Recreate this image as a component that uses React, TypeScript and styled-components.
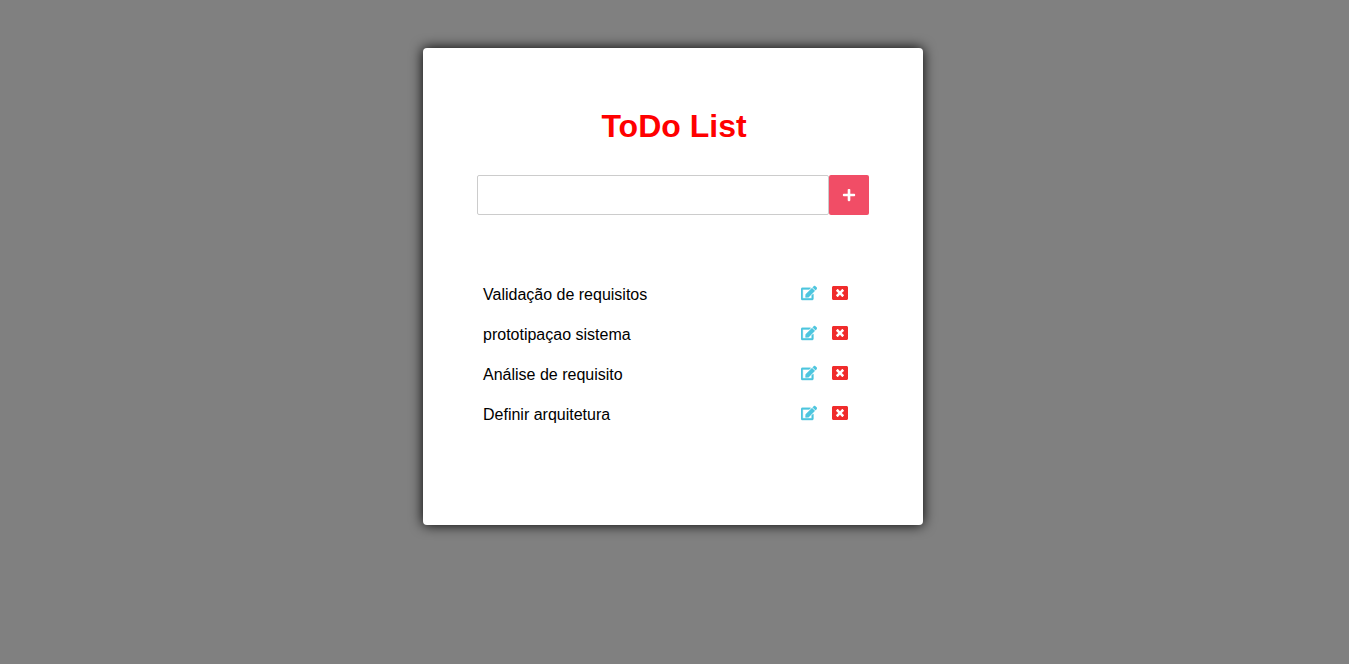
import React from "react";
import styled, { createGlobalStyle } from "styled-components";
import { FaEdit, FaPlus, FaWindowClose } from "react-icons/fa";

const GlobalStyle = createGlobalStyle`
  * { margin: 0; padding: 0; box-sizing: border-box; }
  body {
    background: #808080;
    font-family: "Liberation Sans", Arial, sans-serif;
    font-size: 16px;
    color: #000;
  }
`;

const Page = styled.div`
  min-height: 100vh;
  padding: 48px 0 0 423px;
`;

const Card = styled.main`
  width: 500px;
  height: 477px;
  padding: 59px 54px 0;
  background: #fff;
  border-radius: 4px;
  box-shadow: 0 0 13px #000;
`;

const Title = styled.h1`
  padding-left: 2px;
  font-size: 32px;
  line-height: 38px;
  text-align: center;
  color: #f00;
`;

const Form = styled.form`
  display: flex;
  height: 40px;
  margin-top: 30px;
`;

const Field = styled.input`
  width: 352px;
  padding: 0 10px;
  border: 1px solid #ccc;
  border-radius: 2px;
  font: inherit;
  outline: none;
`;

const AddButton = styled.button`
  display: flex;
  align-items: center;
  justify-content: center;
  width: 40px;
  border: 0;
  border-radius: 2px;
  background: #f14d66;
  color: #fff;
  font-size: 14px;
`;

const List = styled.ul`
  margin-top: 60px;
  list-style: none;
`;

const Item = styled.li`
  display: flex;
  align-items: center;
  justify-content: space-between;
  height: 40px;
  padding: 0 21px 0 6px;
`;

const Actions = styled.span`
  display: flex;
  gap: 15px;
  padding-bottom: 4px;
`;

const EditIcon = styled(FaEdit)`
  color: #4dc6df;
  stroke-width: 12px;
`;

const DeleteIcon = styled(FaWindowClose)`
  color: #f02b2b;
`;

const tasks = [
  "Validação de requisitos",
  "prototipaçao sistema",
  "Análise de requisito",
  "Definir arquitetura",
];

export default function App() {
  return (
    <Page>
      <GlobalStyle />
      <Card>
        <Title>ToDo List</Title>
        <Form>
          <Field />
          <AddButton type="button"><FaPlus /></AddButton>
        </Form>
        <List>
          {tasks.map((task) => (
            <Item key={task}>
              {task}
              <Actions>
                <EditIcon />
                <DeleteIcon />
              </Actions>
            </Item>
          ))}
        </List>
      </Card>
    </Page>
  );
}
